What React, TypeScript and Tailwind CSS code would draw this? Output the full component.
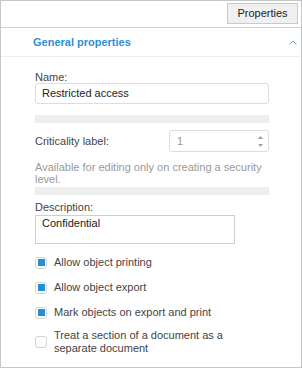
import type { FC, ReactNode } from "react";

const font = { fontFamily: '"Liberation Sans", Arial, sans-serif' };

const CheckRow: FC<{ checked?: boolean; children: ReactNode }> = ( { checked, children } ) => (
    <div className="flex items-center gap-[7px]">
        <div className="w-[12px] h-[12px] shrink-0 rounded-[3px] border border-[#d2d2d2] bg-white flex items-center justify-center">
            { checked && <div className="w-[7px] h-[7px] bg-[#2a8cd2]" /> }
        </div>
        <span className="text-[11px] leading-[13px] text-[#444]">{ children }</span>
    </div>
);

export default function App() {
    return (
        <div style={ font } className="w-[302px] h-[368px] border border-[#c6c6c6] bg-white flex flex-col box-border">
            {/* toolbar */}
            <div className="h-[27px] border-b border-[#d0d0d0] flex justify-end items-start pt-[2px] pr-[3px] shrink-0">
                <button className="w-[71px] h-[21px] border border-[#c9c9c9] bg-[#f0f0f0] text-[11px] text-[#222] leading-none">
                    Properties
                </button>
            </div>

            {/* section header */}
            <div className="h-[29px] shrink-0 border-b border-[#eeeeee] flex items-center justify-between pl-[32px] pr-[3px]">
                <span className="text-[11px] text-[#2f8fd3] font-bold">General properties</span>
                <svg width="8" height="5" viewBox="0 0 8 5" className="mr-[1px]">
                    <path d="M0.5 4.5 L4 1 L7.5 4.5" fill="none" stroke="#5ca3d8" strokeWidth="1" />
                </svg>
            </div>

            {/* body */}
            <div className="flex flex-col pl-[34px] pr-[32px]">
                <div className="mt-[13px] h-[13px] text-[11px] leading-[14px] text-[#444]">Name:</div>
                <div className="h-[21px] border border-[#dcdcdc] rounded-[3px] flex items-center pl-[6px] text-[11px] text-[#222]">
                    Restricted access
                </div>

                <div className="mt-[11px] h-[8px] bg-[#eeeeee]" />

                <div className="mt-[7px] flex items-center justify-between">
                    <span className="text-[11px] text-[#444]">Criticality label:</span>
                    <div className="w-[100px] h-[22px] border border-[#dcdcdc] rounded-[3px] flex items-center justify-between pl-[7px] pr-[5px] text-[11px] text-[#999]">
                        <span>1</span>
                        <div className="flex flex-col gap-[5px]">
                            <svg width="5" height="3" viewBox="0 0 5 3"><path d="M0 3 L2.5 0 L5 3 Z" fill="#a0a0a0" /></svg>
                            <svg width="5" height="3" viewBox="0 0 5 3"><path d="M0 0 L2.5 3 L5 0 Z" fill="#a0a0a0" /></svg>
                        </div>
                    </div>
                </div>

                <div className="mt-[9px] text-[11px] leading-[12px] text-[#999]">
                    Available for editing only on creating a security level.
                </div>

                <div className="mt-[2px] h-[8px] bg-[#eeeeee]" />

                <div className="mt-[5px] text-[11px] leading-[14px] text-[#444]">Description:</div>
                <div className="mt-[1px] w-[200px] h-[29px] border border-[#cfcfcf] pl-[6px] text-[11px] leading-[14px] text-[#222]">
                    Confidential
                </div>

                <div className="mt-[12px] flex flex-col gap-[12px]">
                    <CheckRow checked>Allow object printing</CheckRow>
                    <CheckRow checked>Allow object export</CheckRow>
                    <CheckRow checked>Mark objects on export and print</CheckRow>
                    <div className="-mt-[2px] w-[200px]">
                        <CheckRow>Treat a section of a document as a separate document</CheckRow>
                    </div>
                </div>
            </div>
        </div>
    );
}
